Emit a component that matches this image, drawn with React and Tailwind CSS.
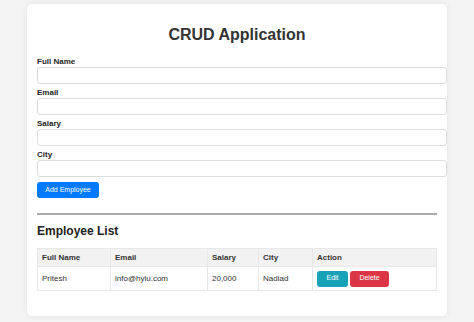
import React, { useState } from 'react';

const fields = [
  { key: 'name', label: 'Full Name' },
  { key: 'email', label: 'Email' },
  { key: 'salary', label: 'Salary' },
  { key: 'city', label: 'City' },
];

const App = () => {
  const [form, setForm] = useState({ name: '', email: '', salary: '', city: '' });
  const [employees] = useState([
    { name: 'Pritesh', email: 'info@hylu.com', salary: '20,000', city: 'Nadiad' },
  ]);

  return (
    <div className="min-h-[322px] bg-[#f4f4f4] pt-[4px] pb-[6px] font-['Liberation_Sans',Arial,sans-serif] text-[#333]">
      <div className="mx-auto w-[420px] rounded-[5px] bg-white p-[10px] shadow-[0_0_6px_rgba(0,0,0,0.08)]">
        <h1 className="mt-[12px] mb-[13px] text-center text-[16px] font-bold leading-[18px]">
          CRUD Application
        </h1>

        {fields.map((f) => (
          <div key={f.key} className="mb-[4px]">
            <label className="block text-[8px] font-bold leading-[10px] text-[#222]">{f.label}</label>
            <input
              type="text"
              value={form[f.key]}
              onChange={(e) => setForm({ ...form, [f.key]: e.target.value })}
              className="block h-[17px] w-[410px] rounded-[3px] border border-[#ddd] px-[4px] text-[8px] outline-none"
            />
          </div>
        ))}

        <button className="mt-[5px] block h-[16px] w-[62px] rounded-[3px] bg-[#007bff] text-[7px] leading-[16px] text-white">
          Add Employee
        </button>

        <hr className="mt-[15px] border-t-[2px] border-[#aaa]" />

        <h2 className="mt-[9px] mb-[10px] text-[12px] font-bold leading-[14px] text-[#222]">Employee List</h2>

        <table className="w-full border-collapse text-left text-[8px]">
          <thead>
            <tr className="h-[18px] bg-[#f2f2f2]">
              <th className="w-[73px] border border-[#e8e8e8] px-[4px] font-bold">Full Name</th>
              <th className="w-[97px] border border-[#e8e8e8] px-[4px] font-bold">Email</th>
              <th className="w-[51px] border border-[#e8e8e8] px-[4px] font-bold">Salary</th>
              <th className="w-[54px] border border-[#e8e8e8] px-[4px] font-bold">City</th>
              <th className="border border-[#e8e8e8] px-[4px] font-bold">Action</th>
            </tr>
          </thead>
          <tbody>
            {employees.map((emp) => (
              <tr key={emp.email} className="h-[24px]">
                <td className="border border-[#e8e8e8] px-[4px]">{emp.name}</td>
                <td className="border border-[#e8e8e8] px-[4px]">{emp.email}</td>
                <td className="border border-[#e8e8e8] px-[4px]">{emp.salary}</td>
                <td className="border border-[#e8e8e8] px-[4px]">{emp.city}</td>
                <td className="border border-[#e8e8e8] px-[4px]">
                  <div className="flex gap-[2px]">
                    <button className="h-[16px] w-[31px] rounded-[3px] bg-[#17a2b8] text-[7px] text-white">Edit</button>
                    <button className="h-[16px] w-[39px] rounded-[3px] bg-[#dc3545] text-[7px] text-white">Delete</button>
                  </div>
                </td>
              </tr>
            ))}
          </tbody>
        </table>

        <div className="h-[15px]" />
      </div>
    </div>
  );
};

export default App;
